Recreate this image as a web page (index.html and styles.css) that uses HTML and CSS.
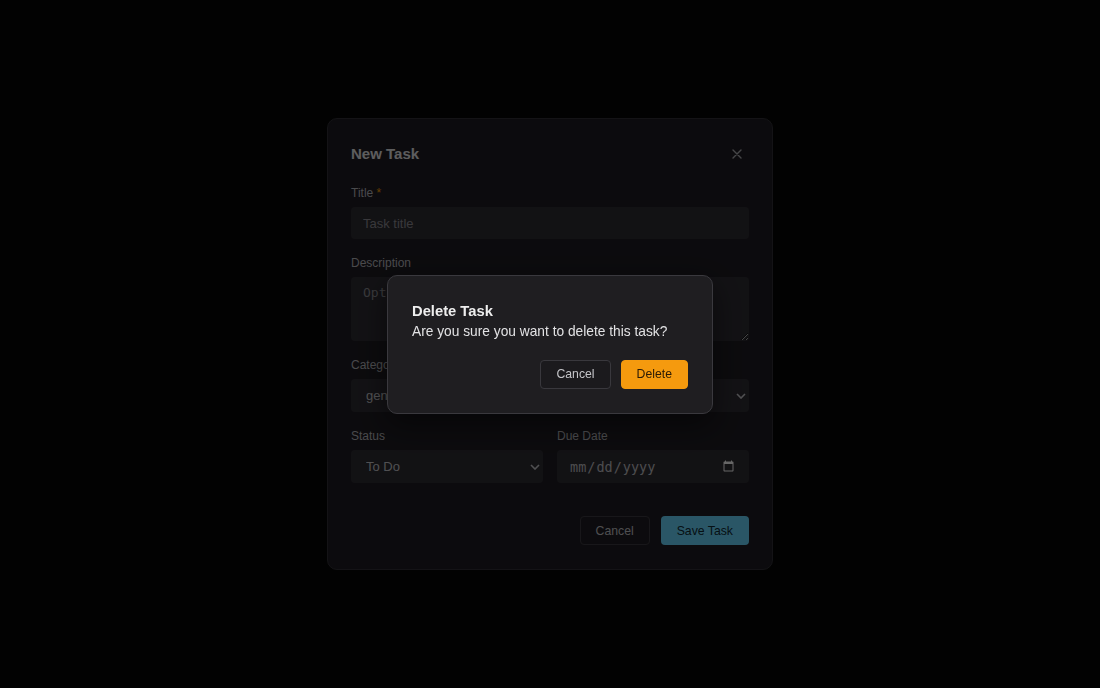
FILE: index.html
```html
<!DOCTYPE html>
<html lang="en">
<head>
    <meta charset="UTF-8">
    <meta name="viewport" content="width=device-width, initial-scale=1.0">
    <title>Tasks</title>
    <link rel="stylesheet" href="styles.css">
</head>
<body>

<!-- Task Modal -->
<div class="modal-backdrop">
    <div class="modal">
        <div class="modal-header">
            <h2>New Task</h2>
            <button class="close-btn" aria-label="Close">
                <svg width="10" height="10" viewBox="0 0 10 10"><path d="M1 1l8 8M9 1l-8 8" stroke="currentColor" stroke-width="1.4" stroke-linecap="round"/></svg>
            </button>
        </div>
        <form>
            <div class="field">
                <label for="taskTitle">Title <span class="req">*</span></label>
                <input type="text" id="taskTitle" placeholder="Task title">
            </div>
            <div class="field">
                <label for="taskDesc">Description</label>
                <textarea id="taskDesc" placeholder="Optional details"></textarea>
            </div>
            <div class="field-row">
                <div class="field">
                    <label for="taskCategory">Category</label>
                    <select id="taskCategory">
                        <option>general</option>
                    </select>
                </div>
                <div class="field">
                    <label for="taskPriority">Priority</label>
                    <select id="taskPriority">
                        <option>Medium</option>
                    </select>
                </div>
            </div>
            <div class="field-row">
                <div class="field">
                    <label for="taskStatus">Status</label>
                    <select id="taskStatus">
                        <option>To Do</option>
                    </select>
                </div>
                <div class="field">
                    <label for="taskDue">Due Date</label>
                    <input type="date" id="taskDue" class="date-input">
                </div>
            </div>
            <div class="modal-actions">
                <button type="button" class="btn btn-ghost">Cancel</button>
                <button type="submit" class="btn btn-primary">Save Task</button>
            </div>
        </form>
    </div>
</div>

<!-- Delete Confirmation -->
<div class="confirm-overlay">
    <div class="confirm">
        <h3>Delete Task</h3>
        <p>Are you sure you want to delete this task?</p>
        <div class="confirm-actions">
            <button class="btn btn-ghost">Cancel</button>
            <button class="btn btn-danger">Delete</button>
        </div>
    </div>
</div>

</body>
</html>
```

FILE: styles.css
```css
/* General Page Styling */
* {
    box-sizing: border-box;
}

body {
    margin: 0;
    height: 100vh;
    font-family: "Liberation Sans", Arial, sans-serif;
    background: #060606;
    color: #e8e8ea;
}

/* Task Modal */
.modal-backdrop {
    height: 100%;
    display: flex;
    justify-content: center;
    align-items: center;
}

.modal {
    width: 446px;
    padding: 23px 23px 24px;
    background: #1f1d23;
    border: 1px solid #323137;
    border-radius: 10px;
}

.modal-header {
    display: flex;
    justify-content: space-between;
    align-items: center;
    margin-bottom: 19px;
}

.modal-header h2 {
    margin: 0;
    font-size: 15px;
    line-height: 24px;
    font-weight: bold;
    color: #e8e8ea;
}

.close-btn {
    width: 24px;
    height: 24px;
    padding: 0;
    border: none;
    background: none;
    color: #b0b0b4;
    display: flex;
    align-items: center;
    justify-content: center;
    cursor: pointer;
}

/* Fields */
.field {
    margin-bottom: 16px;
}

.field label {
    display: block;
    font-size: 12px;
    line-height: 16px;
    margin-bottom: 6px;
    color: #b8b8be;
}

.req {
    color: #f59e0b;
}

.field input,
.field select,
.field textarea {
    display: block;
    width: 100%;
    height: 32px;
    border: none;
    border-radius: 4px;
    background: #2f2d34;
    color: #c8c8cc;
    font-family: "Liberation Sans", Arial, sans-serif;
    font-size: 13px;
    padding: 0 12px;
    color-scheme: dark;
    outline: none;
}

.field input::placeholder,
.field textarea::placeholder {
    color: #8e8d94;
}

.field textarea {
    height: 64px;
    padding: 8px 12px;
    font-family: "DejaVu Sans Mono", monospace;
    font-size: 13px;
    resize: vertical;
}

.field select {
    height: 33px;
    padding-left: 15px;
    appearance: none;
    background-image: url("data:image/svg+xml;utf8,<svg xmlns='http://www.w3.org/2000/svg' width='10' height='6' viewBox='0 0 10 6'><path d='M1 1l4 4 4-4' fill='none' stroke='%23c8c8cc' stroke-width='1.6'/></svg>");
    background-repeat: no-repeat;
    background-position: right 3px center;
}

.field .date-input {
    height: 33px;
    font-family: "DejaVu Sans Mono", monospace;
    font-size: 13.5px;
    color: #c0c0c4;
}

.field-row {
    display: grid;
    grid-template-columns: 1fr 1fr;
    gap: 14px;
}

/* Buttons */
.btn {
    height: 29px;
    padding: 0 15px;
    border: 1px solid transparent;
    border-radius: 4px;
    font-family: "Liberation Sans", Arial, sans-serif;
    font-size: 12.25px;
    cursor: pointer;
}

.btn-ghost {
    background: transparent;
    border-color: #3c3b41;
    color: #c4c4c8;
}

.btn-primary {
    background: #6ad8ff;
    color: #102a34;
}

.btn-danger {
    background: #f59a0e;
    border-color: #f59a0e;
    color: #2a1a05;
}

.modal-actions {
    display: flex;
    justify-content: flex-end;
    gap: 11px;
    margin-top: 17px;
}

/* Delete Confirmation */
.confirm-overlay {
    position: fixed;
    inset: 0;
    background: rgba(0, 0, 0, 0.6);
    display: flex;
    justify-content: center;
    align-items: center;
}

.confirm {
    width: 326px;
    padding: 23px 24px 24px;
    background: #1f1e21;
    border: 1px solid #3a393e;
    border-radius: 10px;
    box-shadow: 0 10px 30px rgba(0, 0, 0, 0.5);
}

.confirm h3 {
    margin: 0;
    font-size: 14.75px;
    line-height: 24px;
    font-weight: bold;
    color: #eeeeee;
}

.confirm p {
    margin: 0;
    font-size: 13.75px;
    line-height: 18px;
    color: #e2e2e4;
}

.confirm-actions {
    display: flex;
    justify-content: flex-end;
    gap: 10px;
    margin-top: 19px;
}

.confirm .btn-ghost {
    background: #1b1a1d;
    border-color: #39383d;
}
```
